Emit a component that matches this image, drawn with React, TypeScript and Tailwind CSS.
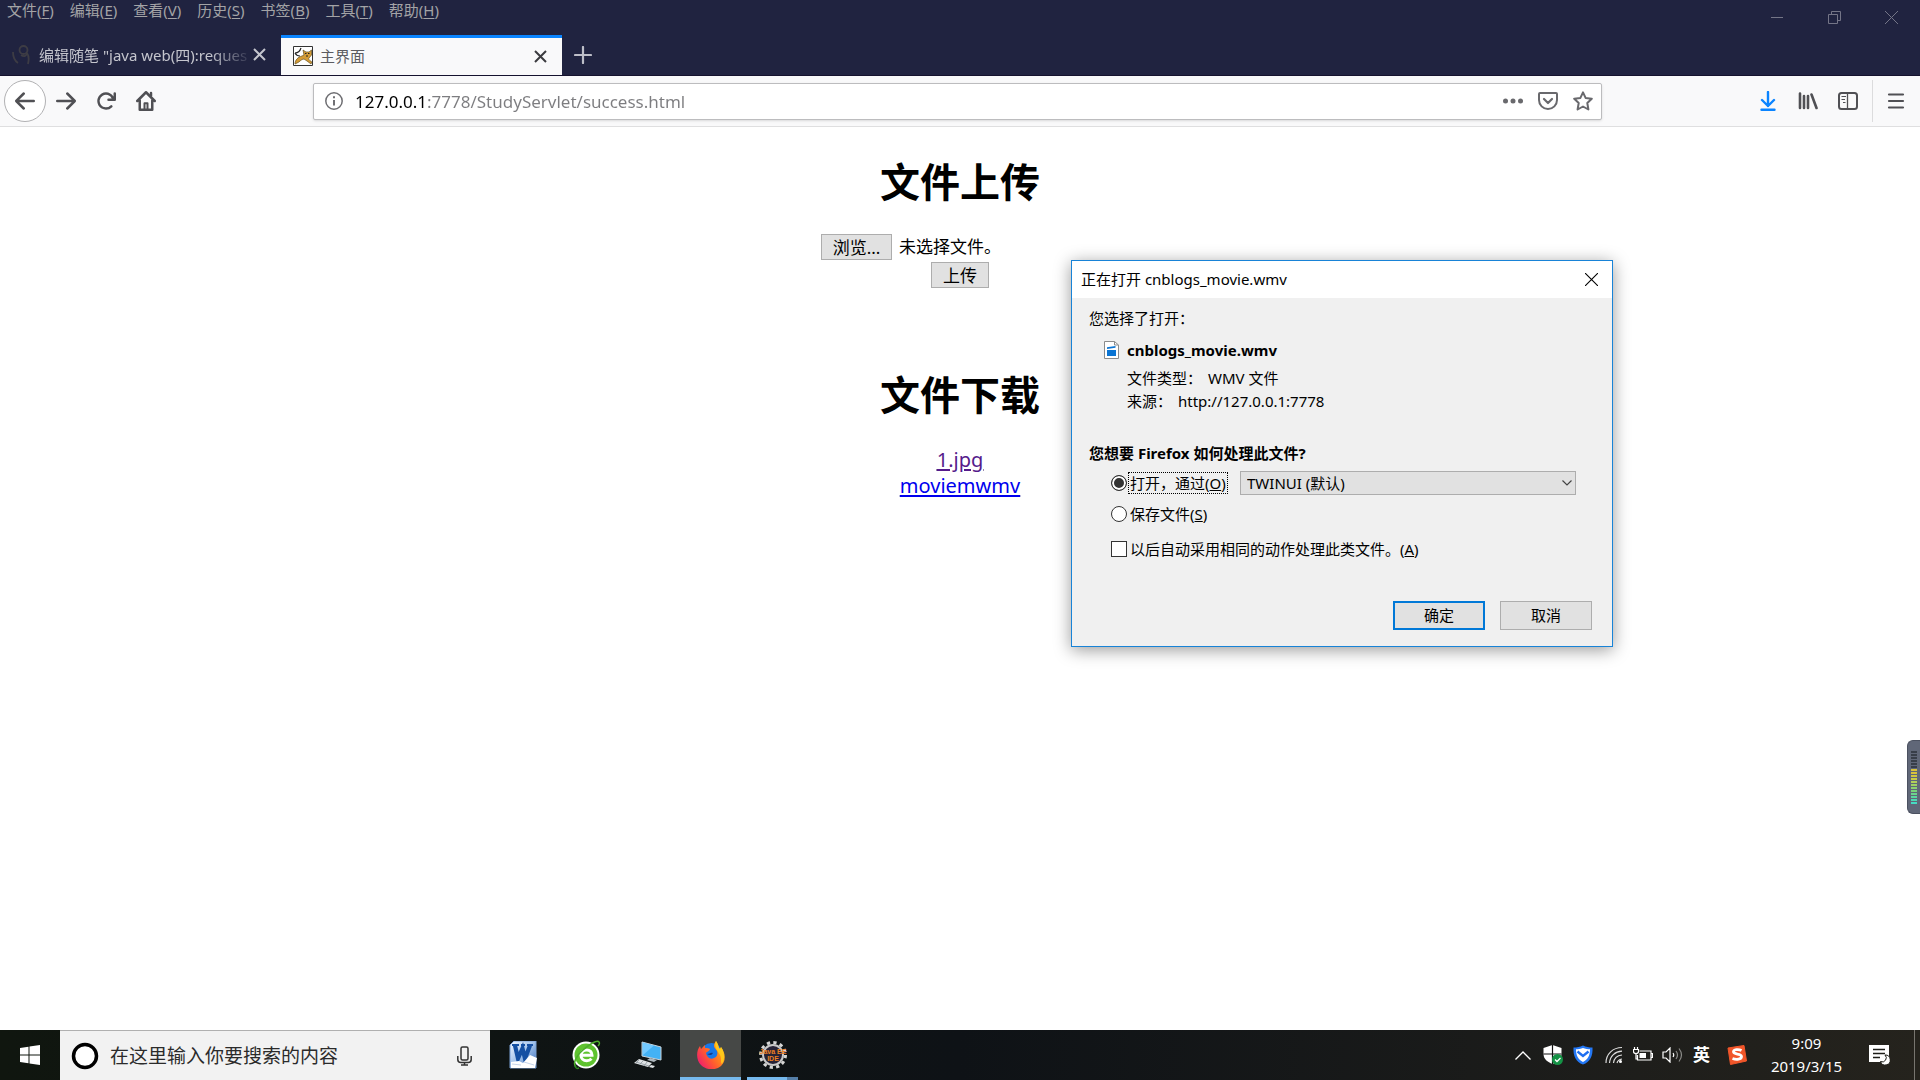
import React, { useRef, useState } from "react"

const menus = [
  ["文件", "F"],
  ["编辑", "E"],
  ["查看", "V"],
  ["历史", "S"],
  ["书签", "B"],
  ["工具", "T"],
  ["帮助", "H"],
]

function TitleBar() {
  return (
    <header className="flex h-[76px] flex-col bg-[#202340] border-b border-[#15122e]">
      <div className="flex h-[35px] items-start justify-between">
        <nav className="flex gap-4 pl-[7px] text-[15px] leading-[20px] text-[#a3a3a6]">
          {menus.map(([name, key]) => (
            <button key={key} className="whitespace-nowrap">
              {name}(<u className="underline-offset-2">{key}</u>)
            </button>
          ))}
        </nav>
        <div className="flex h-[34px] items-center gap-[44px] pr-[22px] text-[#747587]">
          <button aria-label="最小化">
            <svg width="13" height="13" viewBox="0 0 13 13" stroke="currentColor"><path d="M0 6.5h12" /></svg>
          </button>
          <button aria-label="还原">
            <svg width="13" height="13" viewBox="0 0 13 13" stroke="currentColor" fill="none">
              <path d="M.5 3.500h9v9h-9zM3.500 3.500v-3h9v9h-3" />
            </svg>
          </button>
          <button aria-label="关闭">
            <svg width="13" height="13" viewBox="0 0 13 13" stroke="currentColor"><path d="M0 0l13 13M13 0L0 13" /></svg>
          </button>
        </div>
      </div>
      <div className="flex h-[41px] text-[15px] leading-[22px]">
        <div className="flex w-[281px] items-center pl-3 pr-[15px] text-[#c4c5cd]">
          <svg width="18" height="20" viewBox="0 0 18 20" fill="none" stroke="#3d3c44" strokeWidth="1.800" className="shrink-0">
            <path d="M1 7c0 5 2 9 5 11M16 19c1-4 1-8-1-11" />
            <ellipse cx="11.500" cy="5" rx="4" ry="4" />
            <path d="M15 8c0 3-3 4-6 2" />
          </svg>
          <span className="ml-[9px] grow whitespace-nowrap mask-r-from-80%">编辑随笔 "java web(四):reques</span>
          <button aria-label="关闭标签页" className="ml-auto">
            <svg width="13" height="13" viewBox="0 0 13 13" stroke="currentColor" strokeWidth="2" className="block"><path d="M1 1l11 11M12 1L1 12" /></svg>
          </button>
        </div>
        <div className="flex w-[281px] items-center border-t-[3px] border-[#0a84ff] bg-[#f9f9fa] pl-3 pr-[15px] text-[#5b5b60]">
          <svg width="20" height="20" viewBox="0 0 20 20" className="shrink-0">
            <path d="M.5.5h19v19H.5z" fill="#fff" stroke="#333" />
            <path d="M2 18c0-4 3-7 7-8l2-1-1-5 3 2h3l2.500-2v5L16 12c-1 1 1 3 3 4l-1 2-4-3-3-2c-3 0-4 3-7 4z" fill="#d49b35" stroke="#66501f" strokeWidth=".7" />
            <path d="M2 7c3 0 5-2 6-5M7 10C4 10 3 9 2 7M12 7.500h1.500M15 7.500h1.500M13 10h2" stroke="#222" strokeWidth="1.200" fill="none" />
          </svg>
          <span className="ml-[7px] grow">主界面</span>
          <button aria-label="关闭标签页">
            <svg width="13" height="13" viewBox="0 0 13 13" stroke="#3b3b3f" strokeWidth="2" className="block"><path d="M1 1l11 11M12 1L1 12" /></svg>
          </button>
        </div>
        <button aria-label="新建标签页" className="pl-3 text-[#bdbec8]">
          <svg width="18" height="18" viewBox="0 0 18 18" stroke="currentColor" strokeWidth="2.200" strokeLinecap="round"><path d="M9 1v16M1 9h16" /></svg>
        </button>
      </div>
    </header>
  )
}

function ToolBar() {
  return (
    <div className="flex h-[51px] items-center border-b border-[#dfdfe0] bg-[#f9f9fa] pl-1 pr-[15px] text-[#505054]">
      <button aria-label="后退" className="grid size-[42px] shrink-0 place-items-center rounded-full border border-[#b1b1b3] bg-white">
        <svg width="20" height="20" viewBox="0 0 16 16" fill="currentColor">
          <path d="M15 7H3.414l4.293-4.293a1 1 0 0 0-1.414-1.414l-6 6a1 1 0 0 0 0 1.414l6 6a1 1 0 0 0 1.414-1.414L3.414 9H15a1 1 0 0 0 0-2z" />
        </svg>
      </button>
      <div className="flex shrink-0 gap-5 pl-[10px]">
        <button aria-label="前进">
          <svg width="20" height="20" viewBox="0 0 16 16" fill="currentColor">
            <path d="M1 7h11.586L8.293 2.707a1 1 0 0 1 1.414-1.414l6 6a1 1 0 0 1 0 1.414l-6 6a1 1 0 0 1-1.414-1.414L12.586 9H1a1 1 0 0 1 0-2z" />
          </svg>
        </button>
        <button aria-label="重新载入">
          <svg width="20" height="20" viewBox="0 0 16 16" fill="currentColor">
            <path d="M15 1a1 1 0 0 0-1 1v2.418A6.995 6.995 0 1 0 8 15a6.954 6.954 0 0 0 4.950-2.050 1 1 0 0 0-1.414-1.414A5.019 5.019 0 1 1 12.549 6H10a1 1 0 0 0 0 2h5a1 1 0 0 0 1-1V2a1 1 0 0 0-1-1z" />
          </svg>
        </button>
        <button aria-label="主页">
          <svg width="20" height="20" viewBox="0 0 16 16" fill="none" stroke="currentColor" strokeWidth="2" strokeLinecap="round" strokeLinejoin="round">
            <path d="M1 8l7-7 7 7M3 7.500V15h10V7.500" />
            <path d="M6.800 14.500v-4.700h2.400v4.700" strokeWidth="1.600" />
            <path d="M12 1.500v2" />
          </svg>
        </button>
      </div>
      <div className="ml-[157px] mr-[157px] flex h-[37px] grow items-center rounded-xs border border-[#bcbcbe] bg-white pl-[11px] pr-[8px] shadow-sm">
        <svg width="18" height="18" viewBox="0 0 18 18" className="shrink-0">
          <circle cx="9" cy="9" r="8.200" fill="none" stroke="#6f6f73" strokeWidth="1.500" />
          <path d="M9 8v5.500M9 4.200v2" stroke="#6f6f73" strokeWidth="2" />
        </svg>
        <input
          aria-label="地址"
          defaultValue="127.0.0.1:7778/StudyServlet/success.html"
          className="ml-3 h-8 min-w-0 grow bg-linear-to-r from-black from-[73px] to-[#7d7d80] to-[73px] bg-clip-text text-[17px] text-transparent outline-none"
        />
        <div className="flex shrink-0 items-center gap-[15px] text-[#69696d]">
          <button aria-label="页面操作">
            <svg width="20" height="20" viewBox="0 0 20 20" fill="currentColor"><circle cx="2.500" cy="10" r="2.500" /><circle cx="10" cy="10" r="2.500" /><circle cx="17.500" cy="10" r="2.500" /></svg>
          </button>
          <button aria-label="保存到 Pocket">
            <svg width="20" height="20" viewBox="0 0 20 20" fill="none" stroke="currentColor" strokeWidth="2" strokeLinecap="round" strokeLinejoin="round">
              <path d="M2 2h16a1 1 0 0 1 1 1v6a9 9 0 0 1-18 0V3a1 1 0 0 1 1-1z" /><path d="M6 8l4 4 4-4" strokeWidth="2.200" />
            </svg>
          </button>
          <button aria-label="添加书签">
            <svg width="20" height="20" viewBox="0 0 20 20" fill="none" stroke="currentColor" strokeWidth="2" strokeLinejoin="round">
              <path d="M10 1.300l2.600 5.600 6.200.8-4.500 4.300 1.100 6.500L10 15.500l-5.400 3 1.100-6.500L1.200 7.700l6.200-.8z" />
            </svg>
          </button>
        </div>
      </div>
      <div className="flex shrink-0 items-center">
        <button aria-label="下载" className="text-[#0a84ff]">
          <svg width="18" height="20" viewBox="0 0 18 20" fill="none" stroke="currentColor" strokeWidth="2.400" strokeLinecap="round" strokeLinejoin="round">
            <path d="M9 1v14M3 9l6 6 6-6M2.500 18.800h13" />
          </svg>
        </button>
        <button aria-label="我的足迹" className="ml-[21px]">
          <svg width="20" height="20" viewBox="0 0 20 20" stroke="currentColor" strokeWidth="2.600" strokeLinecap="round">
            <path d="M2 2.500V17M6 5V17M10 5V17M13.500 3.500L18.500 17" />
          </svg>
        </button>
        <button aria-label="侧栏" className="ml-5">
          <svg width="20" height="20" viewBox="0 0 20 20" fill="none" stroke="currentColor">
            <rect x="1" y="2" width="18" height="16" rx="2.500" strokeWidth="2" />
            <path d="M9.500 2v16" strokeWidth="1.300" /><path d="M3.500 5.500H8M3.500 8.500H7M5 11.500h2.500" strokeWidth="1.200" />
          </svg>
        </button>
        <div className="ml-[14px] h-[42px] w-px bg-[#dcdcdd]" />
        <button aria-label="打开菜单" className="ml-[14px]">
          <svg width="18" height="18" viewBox="0 0 18 18" stroke="currentColor" strokeWidth="2.200" strokeLinecap="round"><path d="M2 2.500h14M2 9h14M2 15.500h14" /></svg>
        </button>
      </div>
    </div>
  )
}

function Page() {
  const file = useRef<HTMLInputElement>(null)
  return (
    <main className="flex grow flex-col items-center pt-[30px] text-black">
      <h1 className="text-[40px] font-bold leading-[50px]">文件上传</h1>
      <form className="flex flex-col items-center pt-[27px] text-[17px]" onSubmit={(e) => e.preventDefault()}>
        <div className="flex w-[278px] items-center gap-[7px]">
          <input ref={file} id="upload" type="file" className="hidden" />
          <button
            type="button"
            onClick={() => file.current?.click()}
            className="h-[26px] w-[71px] border border-[#adadad] bg-[#e1e1e1] leading-[26px]"
          >
            浏览...
          </button>
          <label htmlFor="upload" className="leading-[26px]">未选择文件。</label>
        </div>
        <button className="mt-[2px] h-[26px] w-[58px] border border-[#adadad] bg-[#e1e1e1] leading-[26px]">上传</button>
      </form>
      <h1 className="pt-[82px] text-[40px] font-bold leading-[50px]">文件下载</h1>
      <div className="flex flex-col items-center pt-[27px] text-[20px] leading-[26px] underline underline-offset-2">
        <a href="#jpg" className="text-[#551a8b]">1.jpg</a>
        <a href="#wmv" className="text-[#0000ee]">moviemwmv</a>
      </div>
    </main>
  )
}

const radio =
  "size-4 shrink-0 appearance-none rounded-full border border-[#333] bg-white checked:bg-[#333] checked:shadow-[inset_0_0_0_2px_white]"

function Dialog() {
  const [mode, setMode] = useState("open")
  return (
    <section
      role="dialog"
      aria-label="正在打开 cnblogs_movie.wmv"
      className="absolute left-[1071px] top-[260px] w-[542px] border border-[#1883d7] bg-[#f0f0f0] text-[15px] leading-[22px] text-black shadow-[0_3px_16px_rgba(0,0,0,0.4)]"
    >
      <div className="flex h-[37px] items-center justify-between bg-white pb-px pl-[9px] pr-[14px]">
        <span>正在打开 cnblogs_movie.wmv</span>
        <button aria-label="关闭">
          <svg width="13" height="13" viewBox="0 0 13 13" stroke="#000" strokeWidth="1.100" className="block"><path d="M0 0l13 13M13 0L0 13" /></svg>
        </button>
      </div>
      <div className="flex flex-col pb-4 pl-[17px] pr-5 pt-[9px]">
        <p>您选择了打开：</p>
        <div className="mt-[10px] flex items-center pl-[15px]">
          <svg width="15" height="18" viewBox="0 0 15 18">
            <path d="M.5.5h10l4 3.500v13.500H.5z" fill="#fff" stroke="#8b8b8b" />
            <path d="M10.500.5V4h4" fill="none" stroke="#8b8b8b" />
            <path d="M3 9h9v6H3zM3 6.200l8.500-1.200v1.800L3 8z" fill="#0a74d3" />
          </svg>
          <b className="ml-2">cnblogs_movie.wmv</b>
        </div>
        <div className="mt-[6px] pl-[38px] leading-[23px]">
          <p className="flex gap-[6px]"><span>文件类型：</span><span>WMV 文件</span></p>
          <p className="flex gap-[6px]"><span>来源：</span><span>http://127.0.0.1:7778</span></p>
        </div>
        <b className="mt-[29px]">您想要 Firefox 如何处理此文件?</b>
        <div className="mt-[7px] flex h-6 items-center pl-[22px]">
          <input id="open" type="radio" name="mode" className={radio} checked={mode === "open"} onChange={() => setMode("open")} />
          <label htmlFor="open" className="ml-px whitespace-nowrap border border-dotted border-black px-px leading-[20px]">打开，通过(<u>O</u>)</label>
          <div className="relative ml-auto mr-[16px] h-6 w-[336px]">
            <select aria-label="打开方式" className="h-6 w-full appearance-none border border-[#adadad] bg-[#e1e1e1] pl-[6px] leading-[22px]">
              <option>TWINUI (默认)</option>
            </select>
            <svg width="10" height="6" viewBox="0 0 10 6" fill="none" stroke="#444" strokeWidth="1.200" className="pointer-events-none absolute right-1 top-[9px]">
              <path d="M.5.5L5 5 9.500.5" />
            </svg>
          </div>
        </div>
        <div className="mt-2 flex items-center gap-[3px] pl-[22px]">
          <input id="save" type="radio" name="mode" className={radio} checked={mode === "save"} onChange={() => setMode("save")} />
          <label htmlFor="save">保存文件(<u>S</u>)</label>
        </div>
        <div className="mt-[13px] flex items-center gap-[3px] pl-[22px]">
          <input id="always" type="checkbox" className="size-4 appearance-none border border-[#333] bg-white checked:bg-[#333]" />
          <label htmlFor="always">以后自动采用相同的动作处理此类文件。(<u>A</u>)</label>
        </div>
        <div className="mt-[41px] flex justify-end gap-[15px] leading-[20px]">
          <button className="h-[29px] w-[92px] border-2 border-[#0078d7] bg-[#e1e1e1] pb-[2px]">确定</button>
          <button className="h-[29px] w-[92px] border border-[#adadad] bg-[#e1e1e1] pb-[2px]">取消</button>
        </div>
      </div>
    </section>
  )
}

function VolumeWidget() {
  const bars = [
    "#383e49", "#383e49", "#383e49", "#383e49", "#383e49", "#383e49",
    "#d8c23c", "#d8c23c", "#d0c63f", "#c9cc48", "#b2d058", "#9fd163", "#8bd36f", "#79d47b", "#6bd68d", "#5bd8a0", "#4fd9b3", "#46dcc2",
  ]
  return (
    <div className="absolute right-0 top-[740px] flex h-[74px] w-[13px] flex-col items-center justify-center gap-px rounded-l-md border border-r-0 border-[#4b5160] bg-[#606778]">
      {bars.map((c, i) => (
        <i key={i} className="h-[2px] w-[6px]" style={{ background: c }} />
      ))}
    </div>
  )
}

function TaskBar() {
  return (
    <footer className="flex h-[50px] items-stretch bg-linear-to-r from-[#10160f] via-[#0e1216] via-50% to-[#25231d] text-white">
      <button aria-label="开始" className="grid w-[60px] place-items-center">
        <svg width="20" height="20" viewBox="0 0 20 20" fill="#fff">
          <path d="M0 3l8.500-1.200v7.700H0zM9.500 1.600L20 0v9.500H9.500zM0 10.500h8.500v7.700L0 17zM9.500 10.500H20V20l-10.500-1.600z" />
        </svg>
      </button>
      <div className="flex w-[430px] items-center border-t border-[#b0b0b0] bg-[#f2f2f2] pl-[11px] pr-[18px]">
        <svg width="28" height="28" viewBox="0 0 28 28" className="shrink-0"><circle cx="14" cy="14" r="11.500" fill="#fff" stroke="#000" strokeWidth="3.500" /></svg>
        <input
          aria-label="搜索"
          placeholder="在这里输入你要搜索的内容"
          className="ml-[11px] h-9 min-w-0 grow text-[19px] outline-none placeholder:text-[#2b2b2b]"
        />
        <svg width="15" height="20" viewBox="0 0 15 20" fill="none" stroke="#333" strokeWidth="1.500">
          <rect x="4" y="1" width="7" height="13" rx="1.500" /><path d="M.8 10v3.500q0 3 3 3h7.400q3 0 3-3V10M7.500 16.500V19M4 19h7" />
        </svg>
      </div>
      <div className="flex">
        <button aria-label="Word" className="grid w-[66px] place-items-center">
          <svg width="28" height="28" viewBox="0 0 28 28">
            <defs><linearGradient id="wd" x1="0" y1="0" x2="1" y2="1"><stop offset="0" stopColor="#f5f9ff" /><stop offset=".5" stopColor="#9fc0ea" /><stop offset="1" stopColor="#3468b5" /></linearGradient></defs>
            <path d="M5 0h22v27H1V4z" fill="url(#wd)" stroke="#7ba0d4" />
            <path d="M3 4h7M12 4h4M18 4h6" stroke="#1550a3" strokeWidth="1.800" />
            <path d="M6 4.500l3 13 4.500-10 2.500 10 5-13" fill="none" stroke="#1550a3" strokeWidth="4.200" />
            <path d="M2 21l8-1 4 2 7-8 7 3-2 10H2z" fill="#fff" />
            <path d="M15 21l10 3M3 23l9 1" stroke="#c5d4ea" />
          </svg>
        </button>
        <button aria-label="360浏览器" className="grid w-[60px] place-items-center">
          <svg width="30" height="30" viewBox="0 0 30 30" fill="none">
            <circle cx="15" cy="15" r="13.500" fill="#fff" /><circle cx="15" cy="15" r="11.500" fill="#5fc32f" />
            <path d="M10 15.200h11c0-3.200-2.200-5.200-5.300-5.200s-5.700 2.200-5.700 5.400 2.400 5.300 5.700 5.300c2 0 3.500-.7 4.800-2" stroke="#fff" strokeWidth="3" />
            <path d="M5 27c-4-4 1-12 7-17S26-1 28 2c1 1 0 3-1 4" stroke="#4cae2a" strokeWidth="1.500" />
            <path d="M4 25c0 3 2 4 4 3" stroke="#2e8a20" strokeWidth="1.500" />
          </svg>
        </button>
        <button aria-label="此电脑" className="grid w-16 place-items-center">
          <svg width="28" height="28" viewBox="0 0 28 28">
            <path d="M8 1l19 5v13L8 15z" fill="#43b2f5" stroke="#c9d4db" /><path d="M9 14L20 4.500l-11-3z" fill="#73caff" />
            <path d="M16 17l-3 2 7 2 3-2z" fill="#aeb8be" /><path d="M5 18l13 4-4 4-14-4z" fill="#dfe3e5" /><path d="M2 21l13 4M5 19l-3 3M9 20l-4 4M13 21l-3 4" stroke="#8d979d" strokeWidth=".8" /><path d="M17 24l4 1-2 2-4-1z" fill="#dfe3e5" />
          </svg>
        </button>
        <button aria-label="Firefox" className="grid w-[61px] place-items-center border-b-[3px] border-[#76b9ed] bg-[#464846]">
          <svg width="28" height="28" viewBox="0 0 28 28" className="mt-[3px]">
            <defs><linearGradient id="fx" x1="0" y1=".7" x2="1" y2="0"><stop offset="0" stopColor="#f0206a" /><stop offset=".35" stopColor="#ff5a30" /><stop offset=".7" stopColor="#ff9b16" /><stop offset="1" stopColor="#ffe226" /></linearGradient></defs>
            <circle cx="14.500" cy="12.500" r="10.500" fill="#1878e8" />
            <path d="M19 0c3 4 2 6 4 8l1-2c5 7 5 14 0 19-6 5-15 4-20-1C-1 19-1 10 3 5l1 3 4-4v3c2 0 4 0 5 1-1 3-4 3-4 4 1 4 4 7 8 5 3-1 4-4 3-7-1-2-3-3-3-5 0-2 1-4 2-5z" fill="url(#fx)" />
            <path d="M10 13c3 0 3-2 6-1-1 2-3 3-6 1z" fill="#123b8c" />
            <path d="M19 0c3 4 2 6 4 8l1-2c4 6 4 13 1 17-2-2 0-5-2-9-3-5-6-8-4-14z" fill="#ffd21c" opacity=".8" />
          </svg>
        </button>
        <button aria-label="Java EE IDE" className="relative ml-[6px] grid w-[51px] place-items-center">
          <svg width="30" height="30" viewBox="0 0 30 30">
            <circle cx="15" cy="15" r="12.500" fill="none" stroke="#d5d5d5" strokeWidth="3" strokeDasharray="3.270 3.270" />
            <circle cx="15" cy="15" r="10" fill="#262236" stroke="#c8c8c8" strokeWidth="2" />
            <text x="15" y="14" textAnchor="middle" fontSize="7" fontWeight="700" fill="#ee7f22" fontFamily="Liberation Sans">Java EE</text>
            <text x="15" y="21" textAnchor="middle" fontSize="7" fontWeight="700" fill="#ee7f22" fontFamily="Liberation Sans">IDE</text>
          </svg>
          <span className="absolute bottom-0 left-0 h-[3px] w-full border-r-[11px] border-[#557fa8] bg-[#76b9ed]" />
        </button>
      </div>
      <div className="ml-auto flex items-center">
        <svg width="16" height="9" viewBox="0 0 16 9" fill="none" stroke="#fff" strokeWidth="1.300"><path d="M.5 8.500L8 1l7.500 7.500" /></svg>
        <svg width="20" height="20" viewBox="0 0 20 20" className="ml-3">
          <path d="M9.500 0l9 3v6c0 5-4 8-9 10-5-2-9-5-9-10V3z" fill="#fff" /><path d="M9.500 0v19M.5 9h18" stroke="#111" strokeWidth="1.200" />
          <circle cx="14.500" cy="14.500" r="5.500" fill="#149245" /><path d="M12 14.500l2 2 3.500-3.500" fill="none" stroke="#fff" strokeWidth="1.300" />
        </svg>
        <svg width="20" height="20" viewBox="0 0 20 20" className="ml-[10px]">
          <path d="M10 .5c3 1.500 6 2 9.500 2C20 11 17 17 10 19.500 3 17 0 11 .5 2.500c3.500 0 6.500-.5 9.500-2z" fill="#2478f5" />
          <path d="M10 3c2 1 5 1.300 7 1.300C17 11 14.500 15 10 17 5.500 15 3 11 3 4.300 5 4.300 8 4 10 3z" fill="#fff" />
          <path d="M4.500 6.500L10 11l5.500-4.500" fill="none" stroke="#1f6ff0" strokeWidth="2.400" />
        </svg>
        <svg width="18" height="18" viewBox="0 0 18 18" fill="none" stroke="#ddd" strokeWidth="1.200" className="ml-3">
          <path d="M1 17C1 8 8 1.500 17 1.500M4.500 17C5 10 10 5.500 17 5.200M8.500 17C9 12.500 12 9.500 17 9M12 17c.5-2 2-3.500 5-4" /><circle cx="15.500" cy="15.500" r="1.500" fill="#fff" stroke="none" />
        </svg>
        <svg width="20" height="16" viewBox="0 0 20 16" fill="none" stroke="#fff" strokeWidth="1.200" className="ml-[10px]">
          <path d="M6.500 4H18v9H4.500V8M18 6.500h1.500v4H18M.5 2.500h5v2q0 2-2.500 2t-2.500-2zM1.500 0v2.500M4.500 0v2.500M3 6.500V12h1.500" /><path d="M6.500 6H13v5H6.500z" fill="#fff" stroke="none" />
        </svg>
        <svg width="22" height="16" viewBox="0 0 22 16" fill="none" stroke="#fff" strokeWidth="1.200" className="ml-[9px]">
          <path d="M1 5h3l4-4v14l-4-4H1zM11 6q1.500 2 0 4" /><path d="M14 4q3 4 0 8M17 1.500q5 6.500 0 13" stroke="#8b8b88" />
        </svg>
        <span className="ml-[9px] -mt-px text-[17px] font-bold leading-none">英</span>
        <svg width="20" height="20" viewBox="0 0 20 20" className="ml-[17px]">
          <path d="M1 3L17 .5l2.500 15.500L3.500 19.500z" fill="#f1562a" stroke="#f1562a" strokeLinejoin="round" />
          <path d="M14.500 5.500c-3-1.500-8-1-8 1.300 0 3 8 1.400 8 4.700 0 3-5 3.500-9 2" fill="none" stroke="#fff" strokeWidth="2.800" />
        </svg>
        <div className="ml-[22px] flex w-[75px] flex-col items-center whitespace-nowrap text-[15px] leading-[23px]">
          <span>9:09</span>
          <span>2019/3/15</span>
        </div>
        <svg width="21" height="20" viewBox="0 0 21 20" className="ml-[25px]">
          <path d="M0 0h20v17h-7l-3 0H0z" fill="#fff" /><path d="M4 4.500h12M4 8.500h12M4 12.500h7" stroke="#1d1d18" strokeWidth="1.300" />
          <path d="M16 10a4 4 0 0 1-4.500 6.500A5 5 0 1 0 16 10z" fill="#fff" stroke="#1d1d18" />
        </svg>
        <div className="ml-6 mr-[5px] h-[50px] w-px bg-[#77756f]" />
      </div>
    </footer>
  )
}

export default function App() {
  return (
    <div className="relative flex min-h-screen flex-col overflow-hidden bg-white font-['Noto_Sans','Noto_Sans_CJK_SC',sans-serif]">
      <TitleBar />
      <ToolBar />
      <Page />
      <Dialog />
      <VolumeWidget />
      <TaskBar />
    </div>
  )
}
